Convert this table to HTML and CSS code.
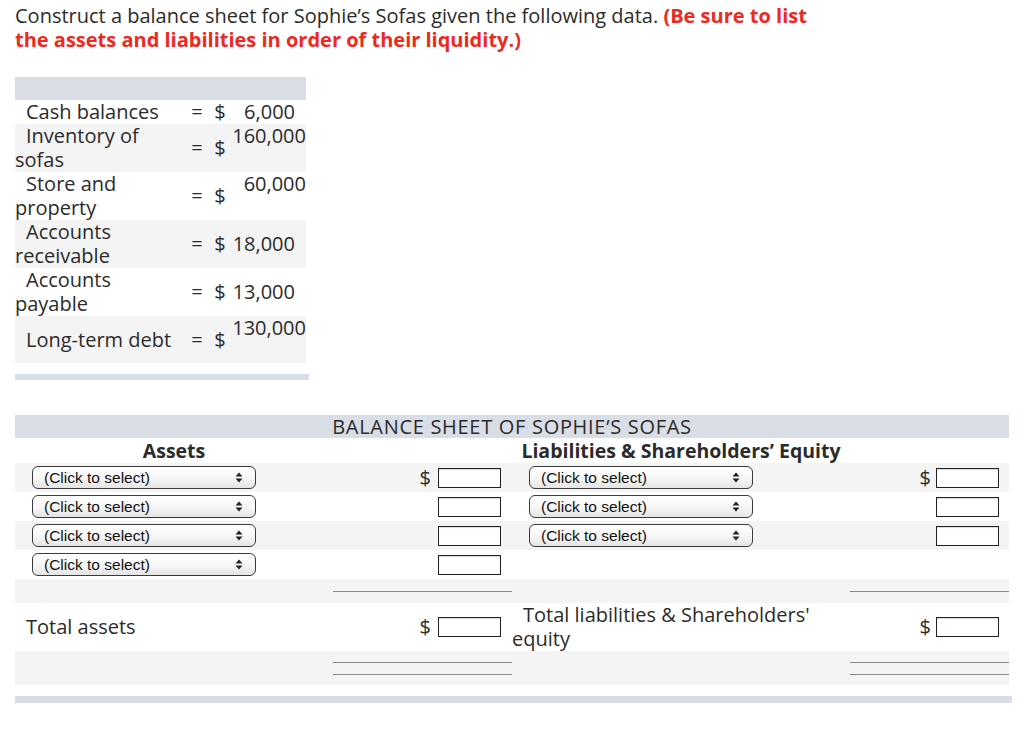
FILE: index.html
```html
<!DOCTYPE html>
<html lang="en">
<head>
<meta charset="utf-8">
<title>Sophie's Sofas balance sheet</title>
<link rel="stylesheet" href="styles.css">
</head>
<body>
<div class="page">
  <p class="prompt">Construct a balance sheet for Sophie’s Sofas given the following data. <strong class="warn">(Be sure to list the assets and liabilities in order of their liquidity.)</strong></p>

  <div class="data">
    <div class="data-head"></div>
    <div class="drow">
      <div class="dlabel">Cash balances</div><div class="deq">=</div><div class="ddol">$</div><div class="dval mid">6,000</div>
    </div>
    <div class="drow alt">
      <div class="dlabel">Inventory of sofas</div><div class="deq">=</div><div class="ddol">$</div><div class="dval top">160,000</div>
    </div>
    <div class="drow">
      <div class="dlabel">Store and property</div><div class="deq">=</div><div class="ddol">$</div><div class="dval top">60,000</div>
    </div>
    <div class="drow alt">
      <div class="dlabel">Accounts receivable</div><div class="deq">=</div><div class="ddol">$</div><div class="dval mid">18,000</div>
    </div>
    <div class="drow">
      <div class="dlabel">Accounts payable</div><div class="deq">=</div><div class="ddol">$</div><div class="dval mid">13,000</div>
    </div>
    <div class="drow alt tall">
      <div class="dlabel center">Long-term debt</div><div class="deq">=</div><div class="ddol">$</div><div class="dval top">130,000</div>
    </div>
  </div>
  <div class="data-foot"></div>

  <div class="bs">
    <div class="bs-title">BALANCE SHEET OF SOPHIE’S SOFAS</div>
    <div class="bs-row heads">
      <div class="hcell">Assets</div><div></div><div class="hcell">Liabilities &amp; Shareholders’ Equity</div><div></div>
    </div>

    <div class="bs-row entry alt">
      <div class="sel-cell"><div class="sel"><span>(Click to select)</span><svg class="arrows" width="8" height="11" viewBox="0 0 8 11"><path d="M4 0.5 L7.5 4.5 H0.5 Z M4 10.5 L7.5 6.5 H0.5 Z" fill="#222"/></svg></div></div>
      <div class="amt"><span class="dol">$</span><span class="box"></span></div>
      <div class="sel-cell"><div class="sel"><span>(Click to select)</span><svg class="arrows" width="8" height="11" viewBox="0 0 8 11"><path d="M4 0.5 L7.5 4.5 H0.5 Z M4 10.5 L7.5 6.5 H0.5 Z" fill="#222"/></svg></div></div>
      <div class="amt r"><span class="dol">$</span><span class="box"></span></div>
    </div>
    <div class="bs-row entry">
      <div class="sel-cell"><div class="sel"><span>(Click to select)</span><svg class="arrows" width="8" height="11" viewBox="0 0 8 11"><path d="M4 0.5 L7.5 4.5 H0.5 Z M4 10.5 L7.5 6.5 H0.5 Z" fill="#222"/></svg></div></div>
      <div class="amt"><span class="box"></span></div>
      <div class="sel-cell"><div class="sel"><span>(Click to select)</span><svg class="arrows" width="8" height="11" viewBox="0 0 8 11"><path d="M4 0.5 L7.5 4.5 H0.5 Z M4 10.5 L7.5 6.5 H0.5 Z" fill="#222"/></svg></div></div>
      <div class="amt r"><span class="box"></span></div>
    </div>
    <div class="bs-row entry alt">
      <div class="sel-cell"><div class="sel"><span>(Click to select)</span><svg class="arrows" width="8" height="11" viewBox="0 0 8 11"><path d="M4 0.5 L7.5 4.5 H0.5 Z M4 10.5 L7.5 6.5 H0.5 Z" fill="#222"/></svg></div></div>
      <div class="amt"><span class="box"></span></div>
      <div class="sel-cell"><div class="sel"><span>(Click to select)</span><svg class="arrows" width="8" height="11" viewBox="0 0 8 11"><path d="M4 0.5 L7.5 4.5 H0.5 Z M4 10.5 L7.5 6.5 H0.5 Z" fill="#222"/></svg></div></div>
      <div class="amt r"><span class="box"></span></div>
    </div>
    <div class="bs-row entry">
      <div class="sel-cell"><div class="sel"><span>(Click to select)</span><svg class="arrows" width="8" height="11" viewBox="0 0 8 11"><path d="M4 0.5 L7.5 4.5 H0.5 Z M4 10.5 L7.5 6.5 H0.5 Z" fill="#222"/></svg></div></div>
      <div class="amt"><span class="box"></span></div>
      <div></div>
      <div></div>
    </div>

    <div class="bs-row rule alt">
      <div></div><div class="line-cell"><span class="line"></span></div><div></div><div class="line-cell"><span class="line"></span></div>
    </div>

    <div class="bs-row total">
      <div class="tlabel">Total assets</div>
      <div class="amt"><span class="dol">$</span><span class="box"></span></div>
      <div class="tlabel wrap">Total liabilities &amp; Shareholders' equity</div>
      <div class="amt r"><span class="dol">$</span><span class="box"></span></div>
    </div>

    <div class="bs-row dbl alt">
      <div></div><div class="line-cell"><span class="line"></span><span class="line"></span></div><div></div><div class="line-cell"><span class="line"></span><span class="line"></span></div>
    </div>
  </div>
  <div class="bs-foot"></div>
</div>
</body>
</html>
```

FILE: styles.css
```css
* { box-sizing: border-box; }

html, body {
  margin: 0;
  padding: 0;
  background: #fff;
}

body {
  font-family: "Open Sans", Lato, sans-serif;
  color: #2b2b2b;
  font-size: 20px;
}

.page {
  padding: 4px 12px 20px 15px;
}

.prompt {
  margin: 0;
  max-width: 820px;
  line-height: 24px;
}

.warn {
  color: #ec2a22;
  font-weight: 700;
}

/* ---------- data table ---------- */
.data {
  width: 291px;
  margin-top: 25px;
}

.data-head {
  height: 23px;
  background: #d9dde5;
}

.drow {
  display: grid;
  grid-template-columns: 166px 32px 14px 79px;
  line-height: 24px;
  min-height: 24px;
}

.drow.alt { background: #f4f4f4; }
.drow.tall { min-height: 47px; }

.dlabel {
  text-indent: 11px;
}
.dlabel.center { align-self: center; }

.deq, .ddol {
  align-self: center;
  text-align: center;
}

.dval { text-align: right; }
.dval.mid { align-self: center; padding-right: 11px; }
.dval.top { align-self: start; }

.data-foot {
  width: 294px;
  height: 6px;
  background: #d9dde5;
  margin-top: 11px;
}

/* ---------- balance sheet ---------- */
.bs {
  width: 994px;
  margin-top: 35px;
}

.bs-title {
  height: 23px;
  line-height: 23px;
  background: #d9dde5;
  text-align: center;
  letter-spacing: 0.7px;
}

.bs-row {
  display: grid;
  grid-template-columns: 318px 179px 338px 159px;
}

.bs-row.alt { background: #f4f4f4; }

.heads {
  height: 25px;
  line-height: 25px;
}

.hcell {
  text-align: center;
  font-weight: 700;
  font-size: 19.5px;
}

.entry { height: 29px; }

.sel-cell {
  display: flex;
  align-items: center;
  padding-left: 17px;
}

.sel {
  position: relative;
  width: 224px;
  height: 23px;
  border: 1px solid #3a3a3a;
  border-radius: 6px;
  background: linear-gradient(#ffffff, #f6f6f6 55%, #e4e4e4);
  font-family: "Liberation Sans", Arial, sans-serif;
  font-size: 15.5px;
  line-height: 21px;
  color: #111;
  padding-left: 11px;
}

.arrows {
  position: absolute;
  right: 12px;
  top: 5px;
}

.amt {
  display: flex;
  align-items: center;
  justify-content: flex-end;
  gap: 7px;
  padding-right: 11px;
}
.amt.r { padding-right: 10px; gap: 5px; }

.dol { line-height: 20px; }

.box {
  display: inline-block;
  width: 63px;
  height: 20px;
  border: 1px solid #222;
  background: #fff;
  box-shadow: inset 0 1px 1px rgba(0,0,0,0.15);
}

.rule { height: 24px; }
.dbl { height: 34px; }

.line-cell {
  display: flex;
  flex-direction: column;
  gap: 11px;
}

.rule .line-cell { padding-top: 12px; }
.dbl .line-cell { padding-top: 11px; }

.line {
  display: block;
  height: 1px;
  background: #8a8a8a;
}

.total {
  height: 48px;
}

.tlabel {
  align-self: center;
  text-indent: 11px;
  line-height: 24px;
}
.tlabel.wrap { padding-right: 30px; }

.bs-foot {
  width: 997px;
  height: 7px;
  margin-top: 11px;
  background: #d9dde5;
}
```
